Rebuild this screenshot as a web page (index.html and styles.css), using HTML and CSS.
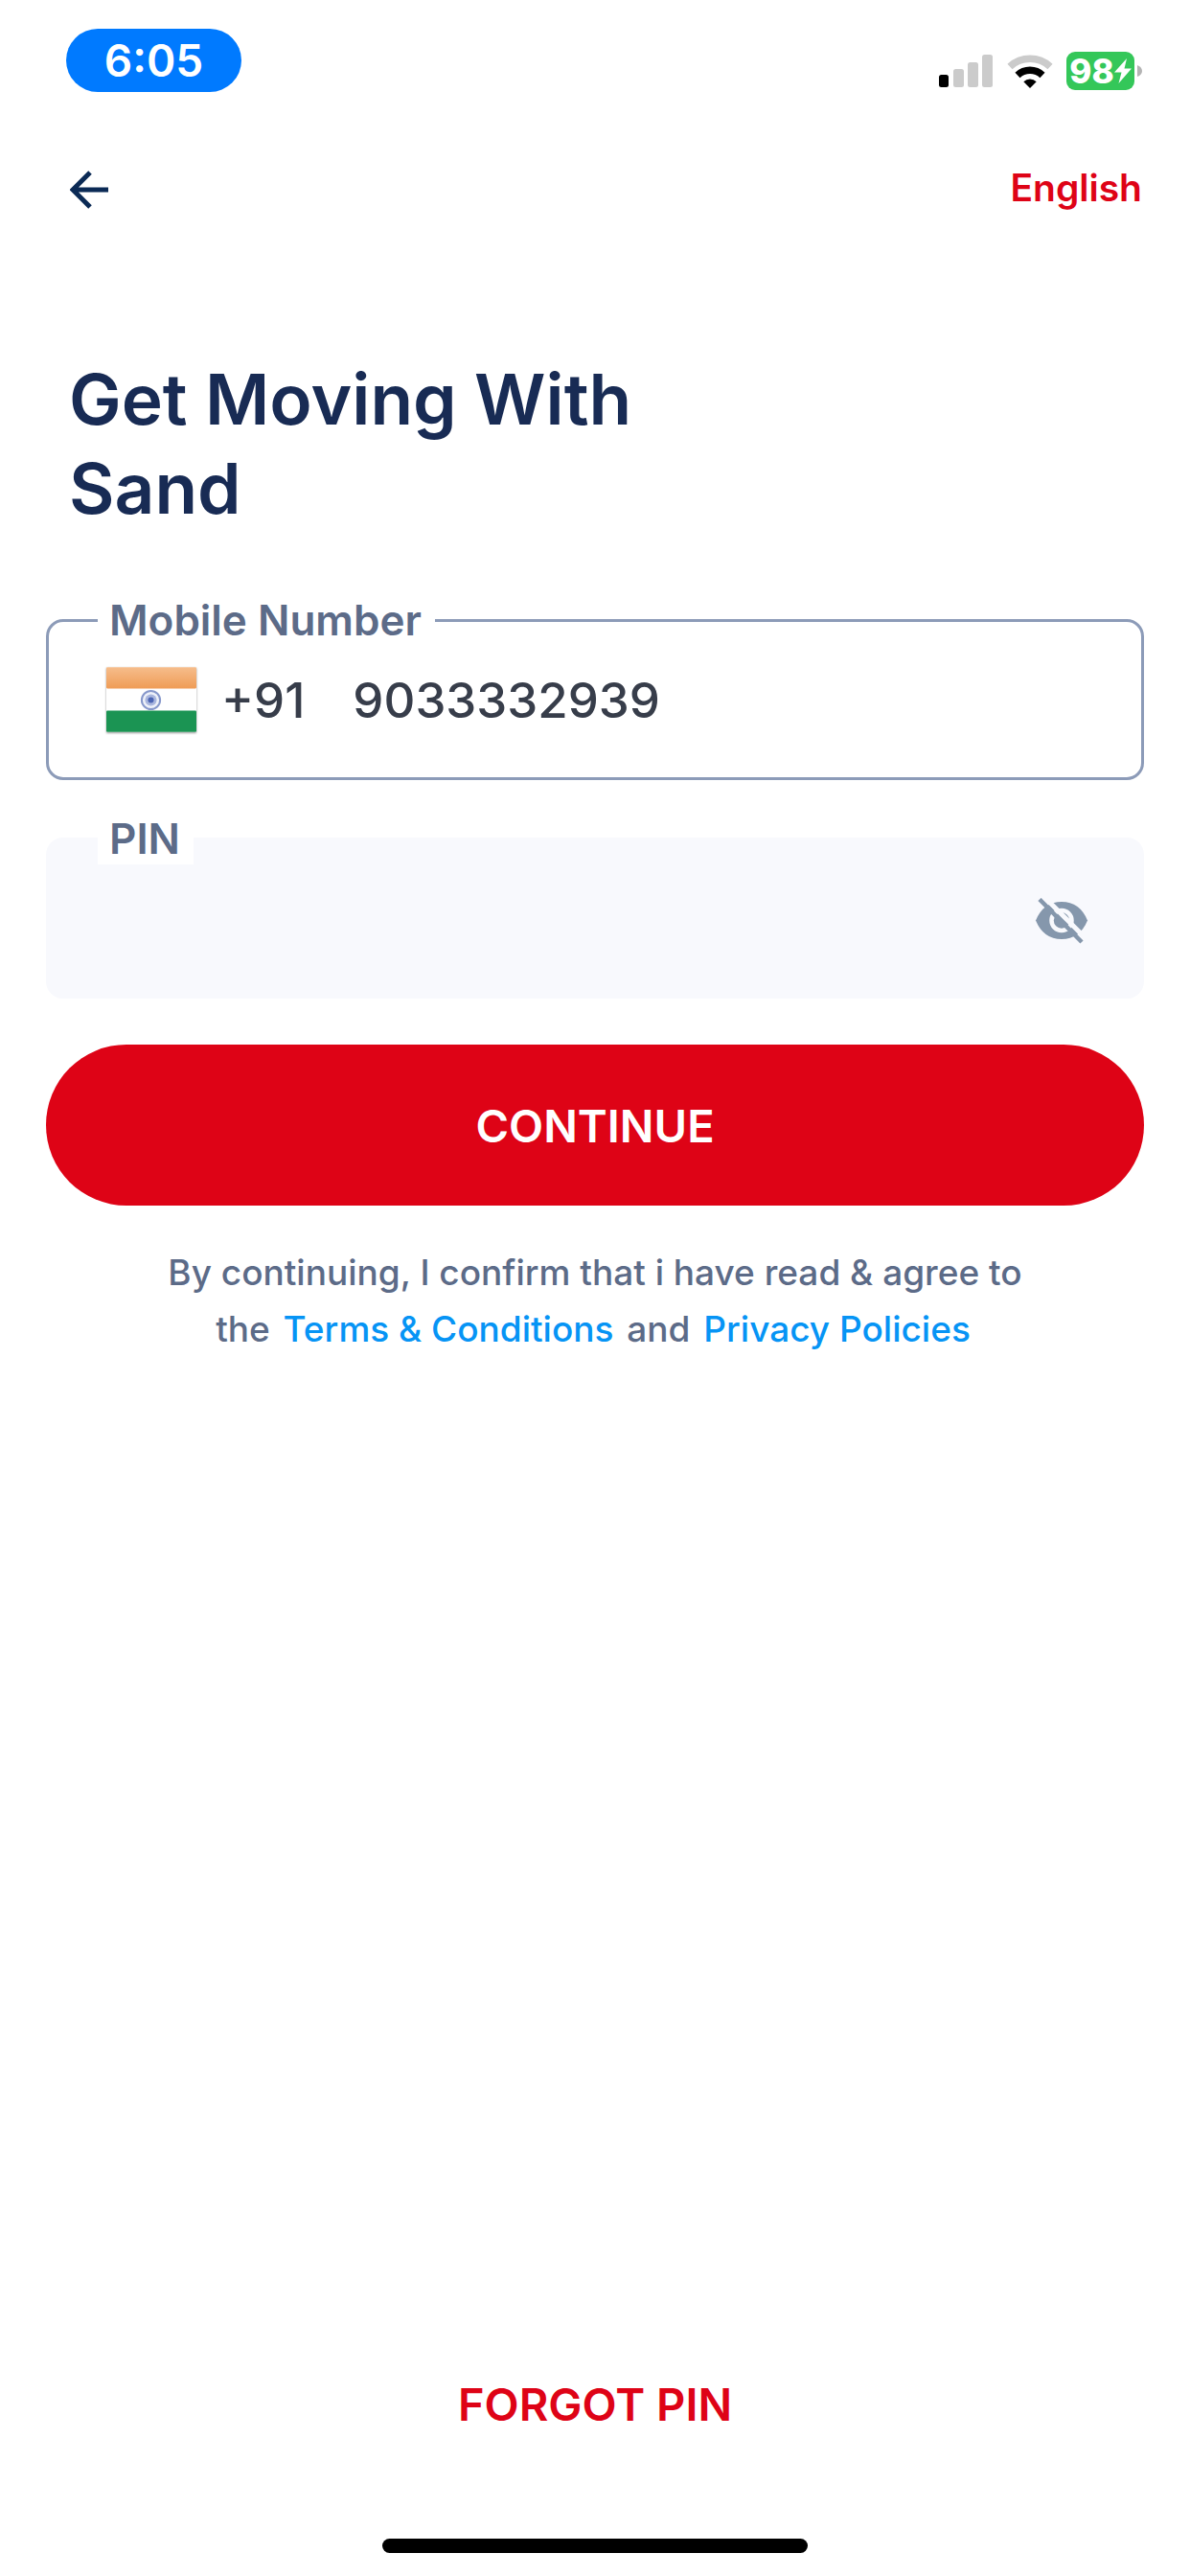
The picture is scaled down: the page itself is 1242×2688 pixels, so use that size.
FILE: index.html
```html
<!DOCTYPE html>
<html lang="en">
<head>
<meta charset="utf-8">
<meta name="viewport" content="width=device-width, initial-scale=1">
<title>Sign in</title>
<link rel="stylesheet" href="styles.css">
</head>
<body>
<div class="screen">
  <div class="status-bar">
    <span class="clock">6:05</span>
    <div class="status-icons">
      <svg class="signal" viewBox="0 0 56 36" aria-hidden="true">
        <rect x="0" y="22" width="10" height="13" rx="2.5" fill="#000"/>
        <rect x="15" y="16" width="11" height="19" rx="2.5" fill="#cbcbcb"/>
        <rect x="30" y="9" width="11" height="26" rx="2.5" fill="#cbcbcb"/>
        <rect x="45" y="1" width="11" height="34" rx="2.5" fill="#cbcbcb"/>
      </svg>
      <svg class="wifi" viewBox="0 0 48 36" aria-hidden="true">
        <path d="M3 13.500A31 31 0 0 1 45 13.500" fill="none" stroke="#cbcbcb" stroke-width="7.500"/>
        <path d="M11 22.500A19 19 0 0 1 37 22.500" fill="none" stroke="#000" stroke-width="7.500"/>
        <path d="M24 36L17.300 29.200A9.800 9.800 0 0 1 30.700 29.200Z" fill="#000"/>
      </svg>
      <div class="battery">
        <span class="battery-level">98</span>
        <svg class="bolt" viewBox="0 0 18 28" aria-hidden="true"><path d="M13 1L0 15.500H7.500L4.500 27L18 11.500H10.500Z" fill="#fff"/></svg>
      </div>
      <svg class="battery-cap" viewBox="0 0 5 14" aria-hidden="true"><path d="M0 1Q5 3 5 7Q5 11 0 13Z" fill="#b4b4b4"/></svg>
    </div>
  </div>

  <header class="top-bar">
    <button class="icon-button" type="button" aria-label="Back">
      <svg class="back-icon" viewBox="0 0 40 40" aria-hidden="true"><path d="M40 20H4M21 2L3 20L21 38" fill="none" stroke="#0b2a55" stroke-width="5"/></svg>
    </button>
    <button class="language" type="button">English</button>
  </header>

  <main class="content">
    <h1 class="title">Get Moving With<br>Sand</h1>
    <form class="form">
      <div class="field field-outlined">
        <label class="field-label" for="mobile">Mobile Number</label>
        <svg class="flag" viewBox="0 0 93 67" role="img" aria-label="India">
          <defs>
            <linearGradient id="saffron" x1="0" y1="0" x2="0" y2="1"><stop offset="0" stop-color="#f6bd8c"/><stop offset="1" stop-color="#ef9c56"/></linearGradient>
          </defs>
          <rect width="93" height="67" rx="1" fill="#fff"/>
          <rect width="93" height="22" rx="1" fill="url(#saffron)"/>
          <rect y="45" width="93" height="22" rx="1" fill="#1b9453"/>
          <circle cx="46" cy="34" r="9.500" fill="#eef1f9" stroke="#8798cb" stroke-width="2"/>
          <circle cx="46" cy="34" r="6" fill="#a9b6de"/>
          <circle cx="46" cy="34" r="3" fill="#4c65b4"/>
        </svg>
        <span class="dial-code">+91</span>
        <input class="input" id="mobile" type="tel" value="9033332939">
      </div>
      <div class="field field-filled">
        <label class="field-label" for="pin">PIN</label>
        <input class="input" id="pin" type="password" autocomplete="off">
        <button class="icon-button" type="button" aria-label="Show PIN">
          <svg class="eye-icon" viewBox="0 0 56 48" aria-hidden="true">
            <path d="M1 23.500Q9 4 28 4Q47 4 55 23.500Q47 43 28 43Q9 43 1 23.500Z" fill="#8597ac"/>
            <circle cx="28" cy="23.500" r="10.500" fill="#8597ac" stroke="#f8f9fd" stroke-width="4.500"/>
            <path d="M8 -3L56 45" stroke="#f8f9fd" stroke-width="5"/>
            <path d="M5 1.500L49 46" stroke="#8597ac" stroke-width="4.500"/>
          </svg>
        </button>
      </div>
      <button class="submit" type="submit">CONTINUE</button>
    </form>
    <p class="terms">By continuing, I confirm that i have read &amp; agree to<br>the <a href="#terms">Terms &amp; Conditions</a> and <a href="#privacy">Privacy Policies</a></p>
  </main>

  <footer class="footer">
    <button class="forgot" type="button">FORGOT PIN</button>
    <div class="home-indicator"></div>
  </footer>
</div>
</body>
</html>
```
FILE: styles.css
```css
* {
  box-sizing: border-box;
}

body {
  margin: 0;
  background: #fff;
  color: #5c6b88;
  font-family: Inter, "Liberation Sans", sans-serif;
  font-weight: 600;
}

button {
  padding: 0;
  border: 0;
  background: none;
  color: inherit;
  font: inherit;
  cursor: pointer;
}

svg {
  display: block;
  flex: none;
}

.screen {
  display: flex;
  flex-direction: column;
  min-height: 100vh;
}

.status-bar {
  display: flex;
  justify-content: space-between;
  align-items: flex-start;
  padding: 30px 50px 0 69px;
}

.clock {
  width: 183px;
  border-radius: 33px;
  background: #007aff;
  color: #fff;
  font-size: 46px;
  line-height: 66px;
  text-align: center;
}

.status-icons {
  display: flex;
  align-items: center;
  padding-top: 24px;
}

.signal {
  width: 56px;
  height: 36px;
  margin-right: 15px;
}

.wifi {
  width: 48px;
  height: 36px;
  margin-right: 14px;
}

.battery {
  display: flex;
  align-items: center;
  justify-content: center;
  width: 71px;
  height: 40px;
  margin-right: 3px;
  border-radius: 9px;
  background: #34c759;
  color: #fff;
}

.battery-level {
  font-size: 35px;
  font-weight: 800;
  line-height: 40px;
}

.bolt {
  width: 18px;
  height: 28px;
}

.battery-cap {
  width: 5px;
  height: 14px;
}

.top-bar {
  display: flex;
  justify-content: space-between;
  align-items: flex-start;
  padding: 70px 50px 0 73px;
}

.back-icon {
  width: 40px;
  height: 40px;
  margin-top: 12px;
}

.language {
  color: #de0316;
  font-size: 39px;
  line-height: 60px;
}

.content {
  padding: 144px 48px 0;
}

.title {
  margin: 0 0 90px;
  padding: 0 24px;
  color: #182b54;
  font-size: 73px;
  font-weight: 600;
  line-height: 93px;
}

.form {
  display: flex;
  flex-direction: column;
}

.field {
  position: relative;
  display: flex;
  align-items: center;
  height: 168px;
  border-radius: 18px;
}

.field-outlined {
  margin-bottom: 60px;
  padding: 0 60px;
  border: 3px solid #8c9bb8;
}

.field-filled {
  margin-bottom: 48px;
  padding: 6px 58px 0;
  background: #f8f9fd;
}

.field-label {
  position: absolute;
  top: -26px;
  left: 54px;
  padding: 0 14px 0 12px;
  background: #fff;
  font-size: 44px;
  line-height: 54px;
}

.field-outlined .field-label {
  top: -29px;
  left: 51px;
}

.flag {
  width: 94px;
  height: 68px;
  margin-right: 26px;
  filter: drop-shadow(0 1px 1px rgba(0, 0, 0, 0.4));
}

.dial-code {
  margin-right: 50px;
  color: #373d4a;
  font-size: 51px;
  font-weight: 500;
}

.input {
  flex: 1;
  min-width: 0;
  height: 100px;
  padding: 0;
  border: 0;
  outline: 0;
  background: none;
  color: #373d4a;
  font: inherit;
  font-size: 51px;
  font-weight: 500;
}

.eye-icon {
  width: 56px;
  height: 48px;
}

.submit {
  height: 168px;
  border-radius: 84px;
  background: #de0316;
  color: #fff;
  font-size: 47px;
}

.terms {
  margin: 40px 0 0;
  font-size: 37px;
  font-weight: 500;
  line-height: 59px;
  text-align: center;
}

.terms a {
  margin: 0 4px;
  color: #0694f5;
  text-decoration: none;
}

.footer {
  display: flex;
  flex-direction: column;
  align-items: center;
  margin-top: auto;
  padding-bottom: 24px;
}

.forgot {
  margin-bottom: 110px;
  color: #de0316;
  font-size: 47px;
  line-height: 60px;
}

.home-indicator {
  width: 444px;
  height: 15px;
  border-radius: 8px;
  background: #000;
}
```
